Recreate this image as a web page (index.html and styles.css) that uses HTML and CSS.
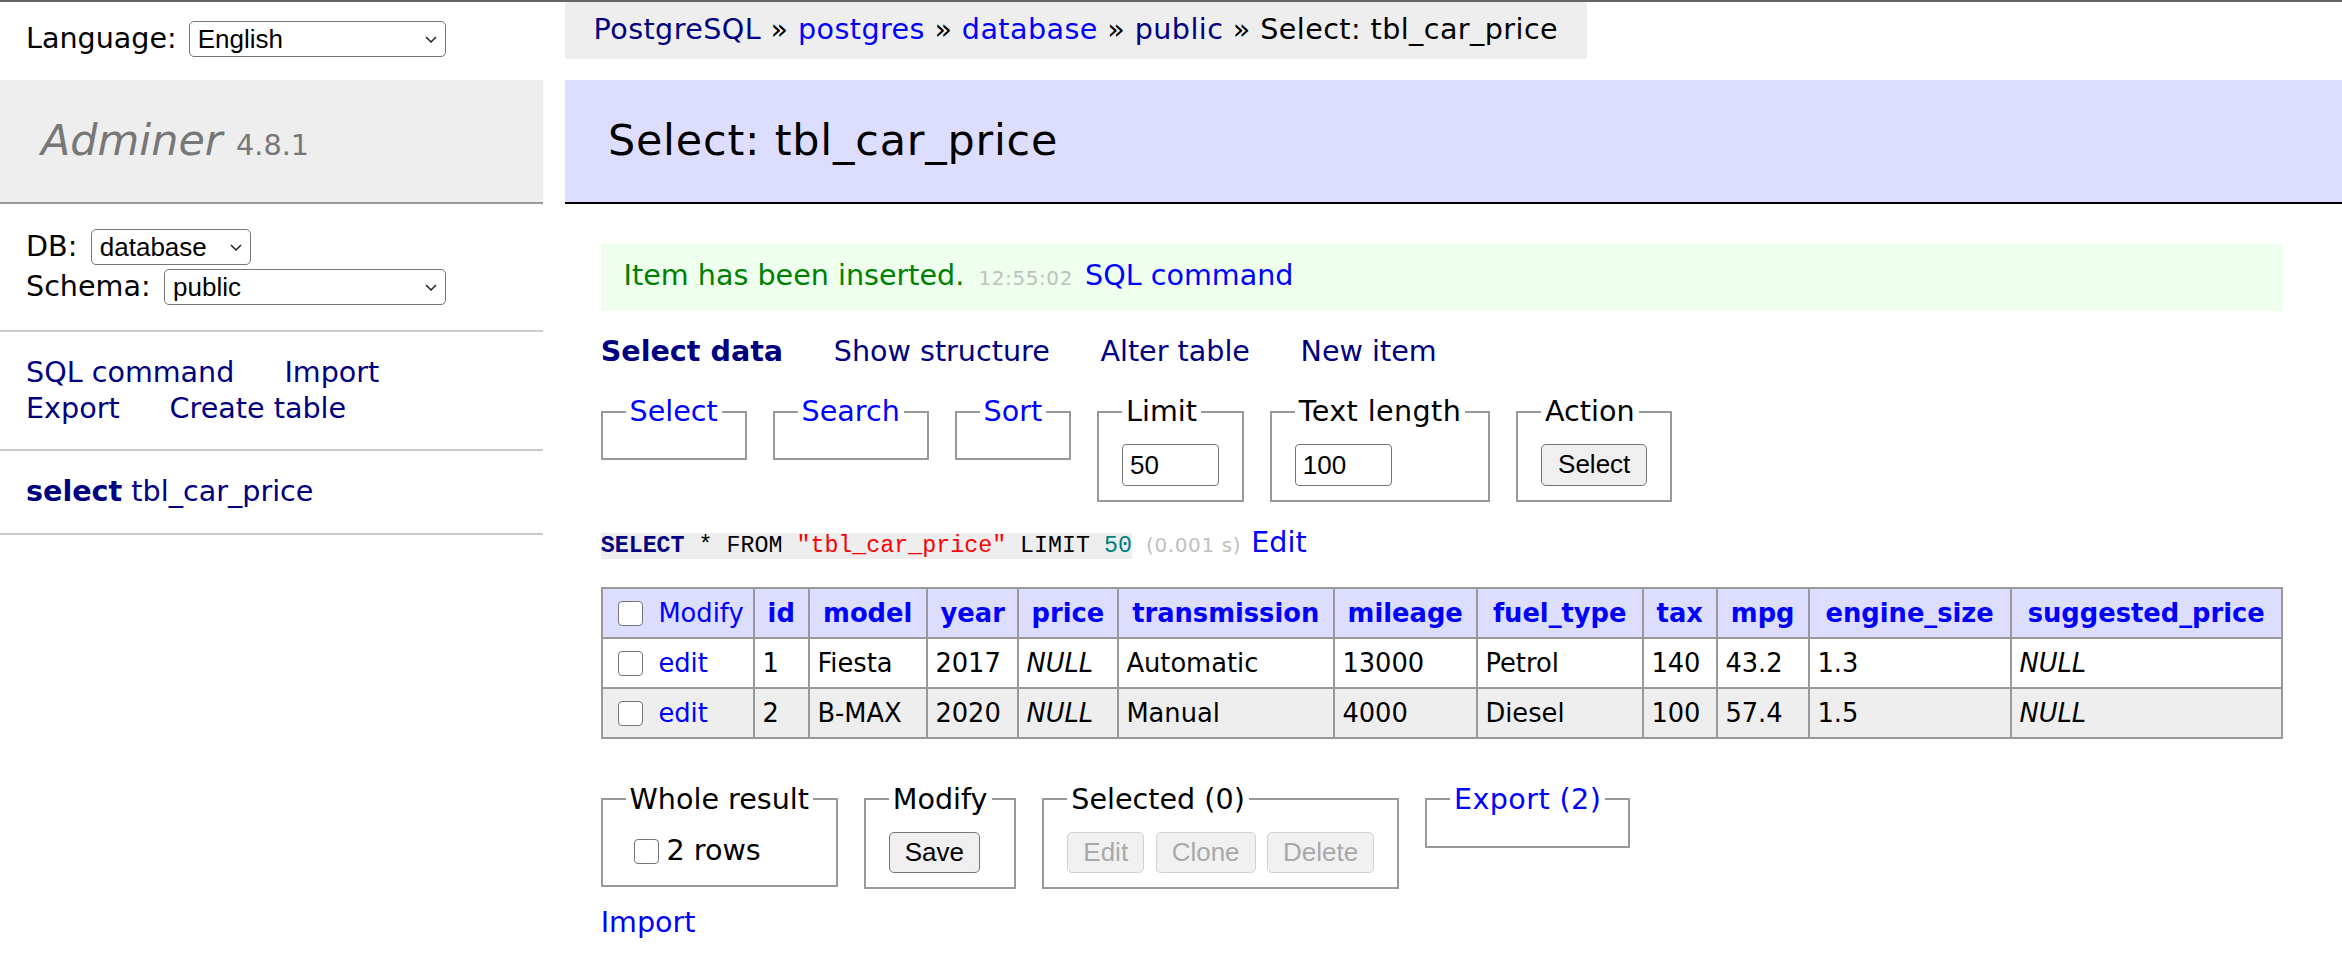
FILE: index.html
```html
<!DOCTYPE html>
<html lang="en">
<head>
<meta charset="utf-8">
<title>Select: tbl_car_price - database - Adminer</title>
<link rel="stylesheet" href="styles.css">
</head>
<body>
<div class="page">
  <aside class="sidebar">
    <form class="lang">
      <span class="lbl">Language:</span>
      <span class="selwrap sw-lang">
        <select class="sel sel-lang"><option>English</option></select>
        <svg class="chev" viewBox="0 0 12 7" width="12" height="7"><polyline points="1,1 6,6 11,1" fill="none" stroke="#222" stroke-width="1.5"/></svg>
      </span>
    </form>
    <h1 class="logo"><a class="brand" href="#">Adminer</a> <span class="version">4.8.1</span></h1>
    <div class="sec dbs">
      <div class="dbrow">
        <span class="lbl">DB:</span>
        <span class="selwrap">
          <select class="sel sel-db"><option>database</option></select>
          <svg class="chev" viewBox="0 0 12 7" width="12" height="7"><polyline points="1,1 6,6 11,1" fill="none" stroke="#222" stroke-width="1.5"/></svg>
        </span>
      </div>
      <div class="dbrow">
        <span class="lbl">Schema:</span>
        <span class="selwrap">
          <select class="sel sel-schema"><option>public</option></select>
          <svg class="chev" viewBox="0 0 12 7" width="12" height="7"><polyline points="1,1 6,6 11,1" fill="none" stroke="#222" stroke-width="1.5"/></svg>
        </span>
      </div>
    </div>
    <div class="sec side-links">
      <div class="lrow"><a class="v" href="#">SQL command</a><a class="v" href="#">Import</a></div>
      <div class="lrow"><a class="v" href="#">Export</a><a class="v" href="#">Create table</a></div>
    </div>
    <ul class="sec tables">
      <li><a class="v b" href="#">select</a> <a class="v" href="#">tbl_car_price</a></li>
    </ul>
  </aside>

  <main class="main">
    <div class="breadcrumb"><a class="v" href="#">PostgreSQL</a> » <a href="#">postgres</a> » <a href="#">database</a> » <a class="v" href="#">public</a> » Select: tbl_car_price</div>
    <h2 class="title">Select: tbl_car_price</h2>

    <div class="content">
      <div class="message">Item has been inserted. <span class="time">12:55:02</span> <a href="#">SQL command</a></div>

      <p class="tabs"><a class="v b" href="#">Select data</a> <a class="v" href="#">Show structure</a> <a class="v" href="#">Alter table</a> <a class="v" href="#">New item</a></p>

      <form class="filters">
        <fieldset><legend><a href="#">Select</a></legend></fieldset>
        <fieldset><legend><a href="#">Search</a></legend></fieldset>
        <fieldset><legend><a href="#">Sort</a></legend></fieldset>
        <fieldset><legend>Limit</legend><input class="num" type="text" value="50"></fieldset>
        <fieldset><legend class="wide">Text length</legend><input class="num" type="text" value="100"></fieldset>
        <fieldset><legend>Action</legend><button class="btn btn-wide" type="button">Select</button></fieldset>
      </form>

      <p class="sql"><code class="code"><b class="kw">SELECT</b> * FROM <span class="str">"tbl_car_price"</span> LIMIT <span class="nm">50</span></code> <span class="time">(0.001 s)</span> <a href="#">Edit</a></p>

      <table class="data">
        <colgroup><col><col><col><col><col><col><col><col><col><col><col><col></colgroup>
        <thead>
          <tr>
            <td class="chk"><input class="cb" type="checkbox"><a href="#">Modify</a></td>
            <th><a href="#">id</a></th>
            <th><a href="#">model</a></th>
            <th><a href="#">year</a></th>
            <th><a href="#">price</a></th>
            <th><a href="#">transmission</a></th>
            <th><a href="#">mileage</a></th>
            <th><a href="#">fuel_type</a></th>
            <th><a href="#">tax</a></th>
            <th><a href="#">mpg</a></th>
            <th><a href="#">engine_size</a></th>
            <th><a href="#">suggested_price</a></th>
          </tr>
        </thead>
        <tbody>
          <tr>
            <td class="chk"><input class="cb" type="checkbox"><a href="#">edit</a></td>
            <td>1</td><td>Fiesta</td><td>2017</td><td><i>NULL</i></td><td>Automatic</td><td>13000</td><td>Petrol</td><td>140</td><td>43.2</td><td>1.3</td><td><i>NULL</i></td>
          </tr>
          <tr>
            <td class="chk"><input class="cb" type="checkbox"><a href="#">edit</a></td>
            <td>2</td><td>B-MAX</td><td>2020</td><td><i>NULL</i></td><td>Manual</td><td>4000</td><td>Diesel</td><td>100</td><td>57.4</td><td>1.5</td><td><i>NULL</i></td>
          </tr>
        </tbody>
      </table>

      <div class="footer">
        <fieldset><legend>Whole result</legend><label class="all"><input class="cb cb-all" type="checkbox">2 rows</label></fieldset>
        <fieldset><legend>Modify</legend><button class="btn" type="button">Save</button></fieldset>
        <fieldset><legend>Selected (0)</legend><div class="btns"><button class="btn" type="button" disabled>Edit</button><button class="btn" type="button" disabled>Clone</button><button class="btn" type="button" disabled>Delete</button></div></fieldset>
        <fieldset><legend class="wide"><a href="#">Export (2)</a></legend></fieldset>
      </div>

      <p class="import"><a href="#">Import</a></p>
    </div>
  </main>
</div>
</body>
</html>
```

FILE: styles.css
```css
html, body {
  margin: 0;
  padding: 0;
}

body {
  font-family: "DejaVu Sans", Verdana, sans-serif;
  font-size: 28.6px;
  line-height: 1.25;
  color: #000;
  background: #fff;
  border-top: 2px solid #666;
}

a {
  color: #0000ff;
  text-decoration: none;
}

a.v {
  color: #000080;
}

.b {
  font-weight: bold;
}

.page {
  display: flex;
  align-items: flex-start;
}

/* ---------- sidebar ---------- */
.sidebar {
  width: 543px;
  flex: none;
}

.lang {
  display: flex;
  align-items: center;
  box-sizing: border-box;
  height: 78px;
  margin: 0;
  padding: 0 0 4px 26px;
  white-space: nowrap;
}

.selwrap {
  position: relative;
  display: inline-block;
  margin-left: 13.5px;
}

.sw-lang {
  margin-left: 12px;
}

.sel {
  -webkit-appearance: none;
  appearance: none;
  display: block;
  box-sizing: border-box;
  height: 36px;
  margin: 0;
  padding: 0 0 0 8px;
  border: 1px solid #767676;
  border-radius: 5px;
  background: #fff;
  color: #000;
  font-family: "Liberation Sans", Arial, sans-serif;
  font-size: 26px;
}

.sel-lang { width: 257px; }
.sel-db { width: 160px; }
.sel-schema { width: 282px; }

.chev {
  position: absolute;
  right: 9px;
  top: 50%;
  margin-top: -3px;
  pointer-events: none;
}

.logo {
  margin: 0;
  padding: 34.3px 0 34.3px 41px;
  font-size: 42.9px;
  line-height: 53.6px;
  font-weight: normal;
  color: #777;
  background: #eee;
  border-bottom: 2px solid #999;
  white-space: nowrap;
}

.brand {
  color: #777;
  font-style: italic;
}

.version {
  color: #777;
  font-size: 28.7px;
  line-height: 1;
}

.sec {
  margin: 0;
  padding: 22.9px 26px;
  border-bottom: 2px solid #ccc;
}

.dbrow {
  display: flex;
  align-items: center;
  height: 40px;
  white-space: nowrap;
}

.lrow {
  display: flex;
  gap: 50px;
  white-space: nowrap;
}

.tables {
  list-style: none;
}

.tables li {
  white-space: nowrap;
}

/* ---------- main ---------- */
.main {
  flex: 1;
  min-width: 0;
  padding-left: 22px;
}

.breadcrumb {
  width: fit-content;
  height: 57px;
  line-height: 54px;
  padding: 0 28.6px;
  background: #eee;
  white-space: nowrap;
  letter-spacing: 0.42px;
}

.title {
  margin: 21px 0 0;
  padding: 34.3px 42.9px;
  font-size: 42.9px;
  line-height: 53.6px;
  font-weight: normal;
  color: #000;
  background: #ddf;
  border-bottom: 2px solid #000;
  white-space: nowrap;
  letter-spacing: 0.8px;
}

.content {
  margin-left: 35.7px;
  width: fit-content;
}

.message {
  margin-top: 39.8px;
  padding: 14.3px 22.9px;
  line-height: 35.75px;
  color: #008000;
  background: #efe;
  white-space: nowrap;
}

.time {
  color: #c0c0c0;
  font-size: 20px;
  letter-spacing: 0.6px;
  margin: 0 1px 0 5px;
}

.message .time {
  margin-right: 3px;
}

.tabs {
  margin: 22.9px 0 0;
  white-space: nowrap;
}

.tabs a {
  margin-right: 41.5px;
}

.filters,
.footer {
  display: flex;
  align-items: flex-start;
  gap: 26px;
  margin: 24px 0 0;
}

fieldset {
  margin: 0;
  padding: 14.3px 22.9px;
  border: 2px solid #999;
  min-width: 0;
}

legend {
  padding: 0 4px;
  line-height: 35.75px;
  white-space: nowrap;
}

legend.wide {
  letter-spacing: 0.4px;
}

.num {
  display: block;
  box-sizing: border-box;
  width: 97px;
  height: 42px;
  margin: 0;
  padding: 0 0 0 7px;
  border: 1px solid #767676;
  border-radius: 4px;
  font-family: "Liberation Sans", Arial, sans-serif;
  font-size: 26px;
  color: #000;
  background: #fff;
}

.btn {
  display: block;
  box-sizing: border-box;
  height: 41.6px;
  margin: 0;
  padding: 0 15px;
  border: 1px solid #767676;
  border-radius: 5px;
  background: #efefef;
  color: #000;
  font-family: "Liberation Sans", Arial, sans-serif;
  font-size: 26px;
}

.btn-wide {
  padding: 0 16px;
}

.btn:disabled {
  color: #a9a9a9;
  border-color: #d2d2d2;
  background: #f1f1f1;
}

.btns {
  display: flex;
  gap: 11.5px;
}

.sql {
  margin: 23px 0 0;
  white-space: nowrap;
}

.code {
  font-family: "Liberation Mono", "Courier New", monospace;
  font-size: 23.3px;
  background: #eee;
}

.kw {
  color: #000080;
}

.str {
  color: #ff0000;
}

.nm {
  color: #007f7f;
}

/* ---------- data table ---------- */
.data {
  margin-top: 25.6px;
  border-collapse: collapse;
  table-layout: fixed;
  width: 1680px;
  font-size: 25.74px;
}

.data col:nth-child(1) { width: 152px; }
.data col:nth-child(2) { width: 55px; }
.data col:nth-child(3) { width: 118px; }
.data col:nth-child(4) { width: 91px; }
.data col:nth-child(5) { width: 100px; }
.data col:nth-child(6) { width: 216px; }
.data col:nth-child(7) { width: 143px; }
.data col:nth-child(8) { width: 166px; }
.data col:nth-child(9) { width: 74px; }
.data col:nth-child(10) { width: 92px; }
.data col:nth-child(11) { width: 202px; }
.data col:nth-child(12) { width: 271px; }

.data td,
.data th {
  border: 2px solid #999;
  height: 48px;
  padding: 0 7.7px;
  white-space: nowrap;
  overflow: hidden;
  text-align: left;
  vertical-align: middle;
}

.data th {
  text-align: center;
  padding: 0 12.9px;
  font-weight: bold;
}

.data thead td,
.data thead th {
  background: #ddf;
}

.data tbody tr:nth-child(2) td {
  background: #eee;
}

.chk {
  white-space: nowrap;
}

.cb {
  -webkit-appearance: none;
  appearance: none;
  display: inline-block;
  box-sizing: border-box;
  width: 25px;
  height: 25px;
  margin: 0 15px 0 8px;
  vertical-align: -4px;
  border: 1.5px solid #767676;
  border-radius: 4px;
  background: #fff;
}

/* ---------- footer ---------- */
.footer {
  margin-top: 42.5px;
}

.all {
  display: flex;
  align-items: center;
  height: 39px;
  white-space: nowrap;
}

.cb-all {
  margin: 0 8px 0 8px;
  vertical-align: middle;
}

.import {
  margin: 15.5px 0 0;
}
```
